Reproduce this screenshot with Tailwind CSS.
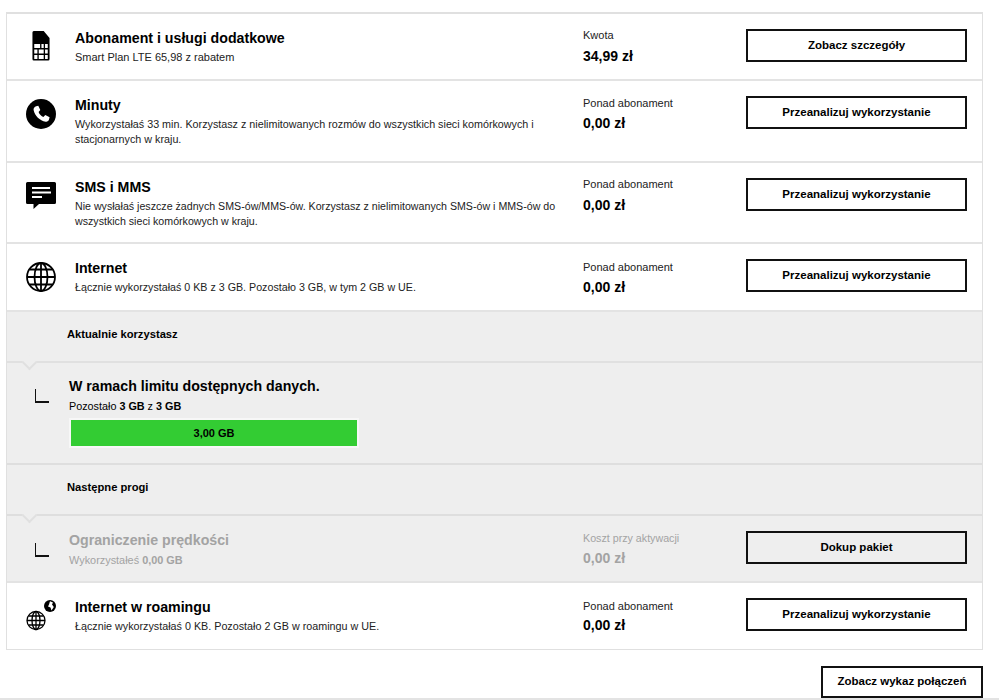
<!DOCTYPE html>
<html lang="pl">
<head>
  <meta charset="UTF-8" />
  <title>Wykorzystanie</title>
  <script src="https://cdn.jsdelivr.net/npm/@tailwindcss/browser@4"></script>
</head>
<body class="bg-white font-['Liberation_Sans',Arial,sans-serif] text-black overflow-hidden">
  <div class="w-[999px] h-[700px] relative overflow-hidden">
    <section class="ml-[6px] mt-[12px] w-[977px] border border-t-2 border-[#e0e0e0]">

      <!-- abonament -->
      <div class="flex h-[67px] border-b-2 border-[#e3e3e3]">
        <div class="w-[68px] shrink-0 flex justify-center pt-[17px]">
          <svg width="18" height="30" viewBox="0 0 20 30" preserveAspectRatio="none">
            <path d="M2 0H13L19.500 7V28a1.500 1.500 0 0 1-1.500 1.500H2A1.500 1.500 0 0 1 .5 28V1.500A1.500 1.500 0 0 1 2 0Z" fill="#000"/>
            <path d="M2.500 13H9V17H2.500ZM10.500 13H13V17H10.500ZM14.500 13H17.500V17H14.500ZM2.500 18.500H6V22.500H2.500ZM7.500 18.500H13V22.500H7.500ZM14.500 18.500H17.500V22.500H14.500ZM2.500 24H6V28H2.500ZM7.500 24H13V28H7.500ZM14.500 24H17.500V28H14.500Z" fill="#fff"/>
          </svg>
        </div>
        <div class="w-[508px] shrink-0 pt-[15px]">
          <h2 class="text-[14.2px] leading-[18px] font-bold">Abonament i usługi dodatkowe</h2>
          <p class="text-[11px] leading-[15px] mt-[3px] text-[#222]">Smart Plan LTE 65,98 z rabatem</p>
        </div>
        <div class="w-[163px] shrink-0 pt-[14px]">
          <p class="text-[11px] leading-[14px] text-[#222]">Kwota</p>
          <p class="text-[14px] leading-[16px] font-bold mt-[6px]">34,99 zł</p>
        </div>
        <div class="pt-[15px]">
          <button class="w-[221px] h-[33px] border-2 border-[#111] bg-white text-[11.5px] font-bold">Zobacz szczegóły</button>
        </div>
      </div>

      <!-- minuty -->
      <div class="flex h-[82px] border-b-2 border-[#e3e3e3]">
        <div class="w-[68px] shrink-0 flex justify-center pt-[18px]">
          <svg width="30" height="30" viewBox="0 0 30 30">
            <circle cx="15" cy="15" r="15" fill="#000"/>
            <path d="M10.200 7.200 L12.300 6.700 L14.300 11 L12.600 12.900 C13.400 15.200 15.300 17 17.400 17.900 L19.300 16.100 L23.600 18.200 L23 20.500 C22.600 22 21.200 23 19.700 22.700 C13.600 21.600 8.900 17 7.600 11 C7.300 9.300 8.500 7.700 10.200 7.200Z" fill="#fff"/>
          </svg>
        </div>
        <div class="w-[508px] shrink-0 pt-[15px]">
          <h2 class="text-[14.2px] leading-[18px] font-bold">Minuty</h2>
          <p class="text-[10.75px] leading-[15px] mt-[3px] text-[#222] w-[470px]">Wykorzystałaś 33 min. Korzystasz z nielimitowanych rozmów do wszystkich sieci komórkowych i stacjonarnych w kraju.</p>
        </div>
        <div class="w-[163px] shrink-0 pt-[15px]">
          <p class="text-[11px] leading-[14px] text-[#222]">Ponad abonament</p>
          <p class="text-[14px] leading-[16px] font-bold mt-[5px]">0,00 zł</p>
        </div>
        <div class="pt-[15px]">
          <button class="w-[221px] h-[33px] border-2 border-[#111] bg-white text-[11.5px] font-bold pt-[1px]">Przeanalizuj wykorzystanie</button>
        </div>
      </div>

      <!-- sms -->
      <div class="flex h-[81px] border-b-2 border-[#e3e3e3]">
        <div class="w-[68px] shrink-0 flex justify-center pt-[19px]">
          <svg width="30" height="27" viewBox="0 0 30 27">
            <path d="M1.500 0H28.500A1.500 1.500 0 0 1 30 1.500V20.500A1.500 1.500 0 0 1 28.500 22H13L7.500 27V22H1.500A1.500 1.500 0 0 1 0 20.500V1.500A1.500 1.500 0 0 1 1.500 0Z" fill="#000"/>
            <path d="M6 5H24V7H6ZM6 9.500H25V11.500H6ZM6 14H16V16H6Z" fill="#fff"/>
          </svg>
        </div>
        <div class="w-[508px] shrink-0 pt-[15px]">
          <h2 class="text-[14.2px] leading-[18px] font-bold">SMS i MMS</h2>
          <p class="text-[10.65px] leading-[15px] mt-[3px] text-[#222] w-[490px]">Nie wysłałaś jeszcze żadnych SMS-ów/MMS-ów. Korzystasz z nielimitowanych SMS-ów i MMS-ów do wszystkich sieci komórkowych w kraju.</p>
        </div>
        <div class="w-[163px] shrink-0 pt-[14px]">
          <p class="text-[11px] leading-[14px] text-[#222]">Ponad abonament</p>
          <p class="text-[14px] leading-[16px] font-bold mt-[6px]">0,00 zł</p>
        </div>
        <div class="pt-[15px]">
          <button class="w-[221px] h-[33px] border-2 border-[#111] bg-white text-[11.5px] font-bold">Przeanalizuj wykorzystanie</button>
        </div>
      </div>

      <!-- internet -->
      <div class="flex h-[68px] border-b-2 border-[#e3e3e3]">
        <div class="w-[68px] shrink-0 flex justify-center pt-[18px]">
          <svg width="30" height="30" viewBox="0 0 30 30" fill="none" stroke="#000" stroke-width="1.800">
            <circle cx="15" cy="15" r="14"/>
            <ellipse cx="15" cy="15" rx="6.500" ry="14"/>
            <path d="M15 1V29M1 15H29M3.500 7.500H26.500M3.500 22.500H26.500"/>
          </svg>
        </div>
        <div class="w-[508px] shrink-0 pt-[15px]">
          <h2 class="text-[14.2px] leading-[18px] font-bold">Internet</h2>
          <p class="text-[10.7px] leading-[15px] mt-[3px] text-[#222]">Łącznie wykorzystałaś 0 KB z 3 GB. Pozostało 3 GB, w tym 2 GB w UE.</p>
        </div>
        <div class="w-[163px] shrink-0 pt-[16px]">
          <p class="text-[11px] leading-[14px] text-[#222]">Ponad abonament</p>
          <p class="text-[14px] leading-[16px] font-bold mt-[5px]">0,00 zł</p>
        </div>
        <div class="pt-[15px]">
          <button class="w-[221px] h-[33px] border-2 border-[#111] bg-white text-[11.5px] font-bold">Przeanalizuj wykorzystanie</button>
        </div>
      </div>

      <!-- aktualnie -->
      <div class="bg-[#eeeeee]">
        <div class="h-[51px] border-b-2 border-[#e0e0e0] pl-[60px] pt-[15px] text-[11.2px] leading-[14px] font-bold relative">
          Aktualnie korzystasz
          <span class="absolute left-[17px] bottom-[-7px] w-[11px] h-[11px] rotate-45 bg-[#eeeeee] border-r-2 border-b-2 border-[#e0e0e0]"></span>
        </div>
        <div class="h-[102px] border-b-2 border-[#dedede] flex">
          <div class="w-[62px] shrink-0 pl-[28px] pt-[26px]">
            <div class="w-[14px] h-[14px] border-l-[1.5px] border-b-2 border-[#111]"></div>
          </div>
          <div class="pt-[14px]">
            <h2 class="text-[14.2px] leading-[18px] font-bold">W ramach limitu dostępnych danych.</h2>
            <p class="text-[10.8px] leading-[14px] mt-[4px]">Pozostało <b>3 GB</b> z <b>3 GB</b></p>
            <div class="mt-[5px] w-[290px] h-[30px] border-2 border-[#f7f7f7] bg-[#33cc33] flex items-center justify-center text-[11px] font-bold">3,00 GB</div>
          </div>
        </div>
        <div class="h-[51px] border-b-2 border-[#dedede] pl-[60px] pt-[15px] text-[11.2px] leading-[14px] font-bold relative">
          Następne progi
          <span class="absolute left-[17px] bottom-[-7px] w-[11px] h-[11px] rotate-45 bg-[#eeeeee] border-r-2 border-b-2 border-[#e0e0e0]"></span>
        </div>
        <div class="h-[67px] border-b-2 border-[#e3e3e3] flex">
          <div class="w-[62px] shrink-0 pl-[28px] pt-[27px]">
            <div class="w-[14px] h-[14px] border-l-[1.5px] border-b-2 border-[#111]"></div>
          </div>
          <div class="w-[514px] shrink-0 pt-[15px] text-[#a3a3a3]">
            <h2 class="text-[14.2px] leading-[18px] font-bold">Ograniczenie prędkości</h2>
            <p class="text-[10.9px] leading-[14px] mt-[4px]">Wykorzystałeś <b>0,00 GB</b></p>
          </div>
          <div class="w-[163px] shrink-0 pt-[15px] text-[#a3a3a3]">
            <p class="text-[10.7px] leading-[14px]">Koszt przy aktywacji</p>
            <p class="text-[14px] leading-[16px] font-bold mt-[5px]">0,00 zł</p>
          </div>
          <div class="pt-[15px]">
            <button class="w-[221px] h-[33px] border-2 border-[#111] text-[11.5px] font-bold">Dokup pakiet</button>
          </div>
        </div>
      </div>

      <!-- roaming -->
      <div class="flex h-[66px]">
        <div class="w-[68px] shrink-0 pl-[19px] pt-[17px]">
          <svg width="30" height="31" viewBox="0 0 30 31" fill="none" stroke="#000">
            <g stroke-width="1.300">
              <circle cx="10" cy="20.500" r="9"/>
              <ellipse cx="10" cy="20.500" rx="4" ry="9"/>
              <path d="M10 11.500V29.500M1 20.500H19M2.500 16H17.500M2.500 25H17.500"/>
            </g>
            <circle cx="24" cy="6" r="6" fill="#000" stroke="none"/>
            <path d="M24 1.200L27 2.500L26 4.500L27.800 7L25.500 10.500L24.500 7.500L22 6.500L23 4.500Z" fill="#fff" stroke="none"/>
          </svg>
        </div>
        <div class="w-[508px] shrink-0 pt-[15px]">
          <h2 class="text-[14.2px] leading-[18px] font-bold">Internet w roamingu</h2>
          <p class="text-[10.75px] leading-[15px] mt-[3px] text-[#222]">Łącznie wykorzystałaś 0 KB. Pozostało 2 GB w roamingu w UE.</p>
        </div>
        <div class="w-[163px] shrink-0 pt-[16px]">
          <p class="text-[11px] leading-[14px] text-[#222]">Ponad abonament</p>
          <p class="text-[14px] leading-[16px] font-bold mt-[4px]">0,00 zł</p>
        </div>
        <div class="pt-[15px]">
          <button class="w-[221px] h-[33px] border-2 border-[#111] bg-white text-[11.5px] font-bold">Przeanalizuj wykorzystanie</button>
        </div>
      </div>
    </section>

    <div class="ml-[821px] mt-[16px] w-[162px]">
      <button class="w-[162px] h-[32px] border-2 border-[#111] bg-white text-[11.5px] font-bold">Zobacz wykaz połączeń</button>
    </div>
    <div class="absolute left-0 right-0 bottom-0 h-[2px] bg-[#e3e3e3]"></div>
  </div>
</body>
</html>
